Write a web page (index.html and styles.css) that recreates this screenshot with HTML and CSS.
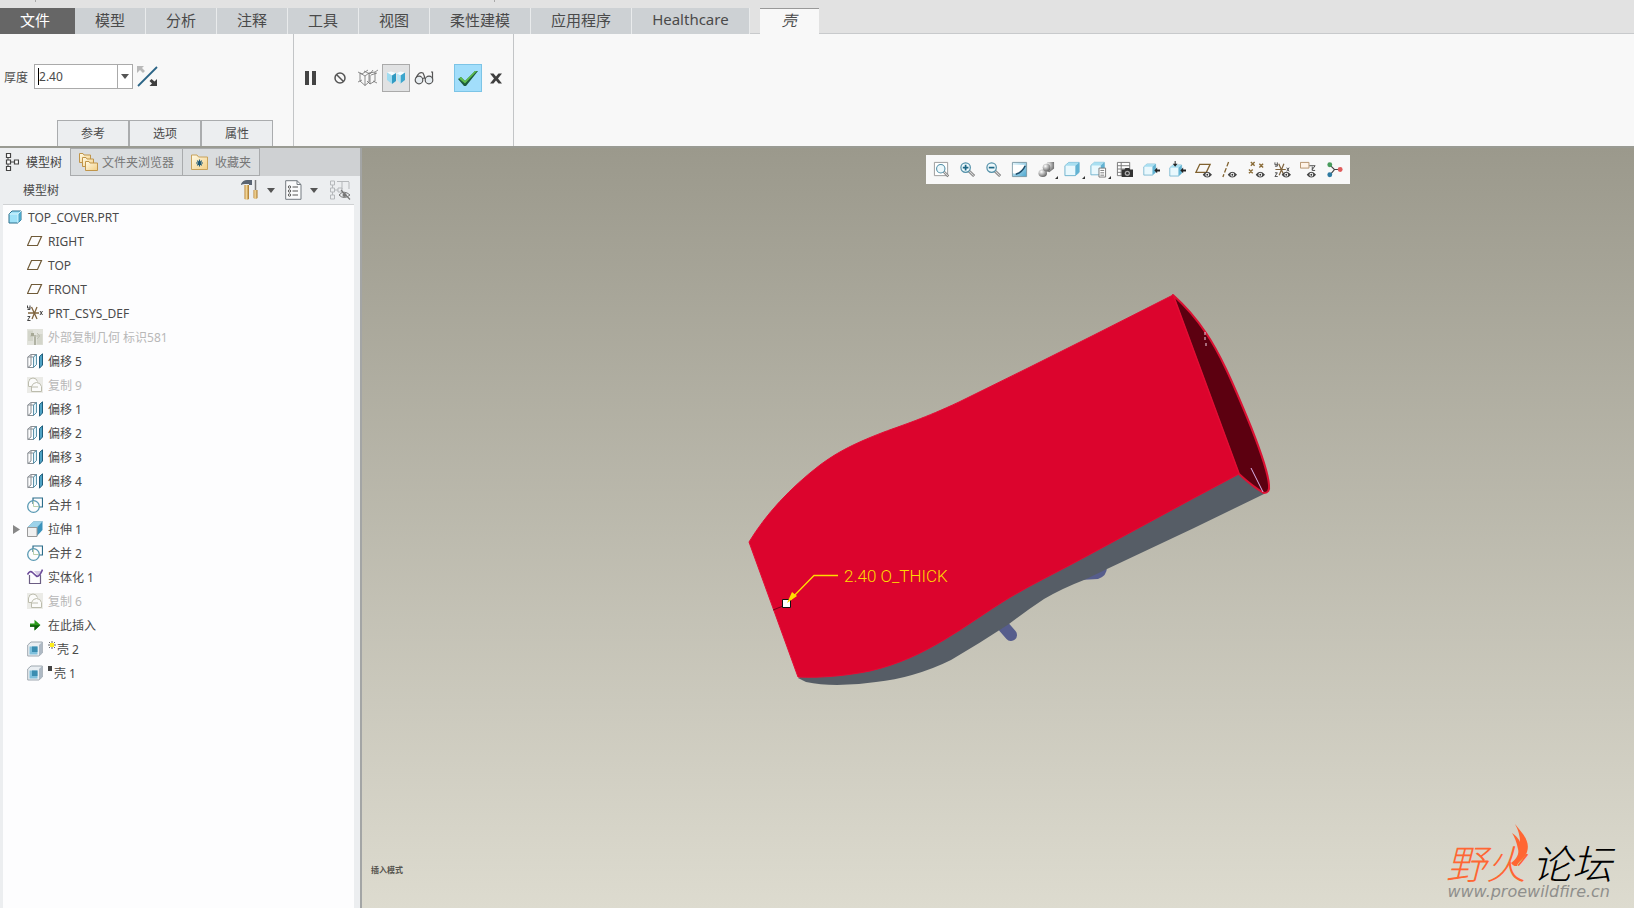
FILE: index.html
```html
<!DOCTYPE html>
<html lang="zh-CN">
<head>
  <meta charset="UTF-8" />
  <title>TOP_COVER.PRT</title>
  <meta name="viewport" content="width=device-width, initial-scale=1.0" />
  <link rel="stylesheet" href="styles.css">
</head>
<body>

<!-- shared icons -->
<svg class="defs" aria-hidden="true">
  <defs>
    <linearGradient id="wood" x1="0" x2="1" y1="0" y2="0">
      <stop offset="0" stop-color="#b8812f"/><stop offset=".4" stop-color="#f6dca0"/><stop offset="1" stop-color="#a87424"/>
    </linearGradient>
    <linearGradient id="folderFill" x1="0" x2="1" y1="0" y2="1">
      <stop offset="0" stop-color="#fffbe8"/><stop offset="1" stop-color="#f3cf85"/>
    </linearGradient>
    <linearGradient id="blueFill" x1="0" x2="1" y1="0" y2="1">
      <stop offset="0" stop-color="#eaf8fd"/><stop offset="1" stop-color="#4aa6cf"/>
    </linearGradient>
    <radialGradient id="metal" cx=".35" cy=".3" r=".8">
      <stop offset="0" stop-color="#fff"/><stop offset=".5" stop-color="#aaa"/><stop offset="1" stop-color="#555"/>
    </radialGradient>
    <symbol id="plane" viewBox="0 0 16 16">
      <path d="M4.500 3.500H14.500L10.500 12.500H.5Z" fill="none" stroke="#6f5a38" stroke-width="1.200"/>
    </symbol>
    <symbol id="part" viewBox="0 0 14 14">
      <path d="M1 4L4 1H13V10L10 13H1Z" fill="#9fe2f8" stroke="#2b6f8c"/>
      <path d="M10 4L13 1V10L10 13Z" fill="#4da8cb"/>
      <path d="M1.500 4H10V13M10 4L13 1" fill="none" stroke="#e8fbff" stroke-width=".8"/>
    </symbol>
    <symbol id="csys" viewBox="0 0 16 16">
      <path d="M1 8H12M4.500 2L10 14M10 2L5 14" stroke="#80653f" stroke-width="1.300"/>
      <path d="M.5 .5V3H3M3 .5V4.500H.5M13 6l2.500 4M15.500 6L13 10M.5 11.500H3L.5 15.500H3.500" fill="none" stroke="#444"/>
    </symbol>
    <symbol id="offset" viewBox="0 0 16 16">
      <path d="M.8 4L4 1.500H9.500V11.500L6.500 14.500H.8ZM4 1.500V12L.8 14.500M6.500 4V14.500M6.500 4L9.500 1.500M.8 4H6.500" fill="none" stroke="#8a8f94"/>
      <path d="M6.500 4L9.500 1.500V11.500L6.500 14.500Z" fill="#e4f3f9" stroke="#5d93ab"/>
      <path d="M12.500 3.500L15.500 .8V12L12.500 15.200Z" fill="#4fa3c6" stroke="#1e5d7b"/>
    </symbol>
    <symbol id="copy" viewBox="0 0 16 16">
      <path d="M0 0H16V16H0Z" fill="#ebebe7"/>
      <path d="M1 5Q2 1 6 1Q9.500 1 10.500 4.500L8 6L4 10H1Z" fill="#fbfbfa"/>
      <path d="M4.500 14.500V9.500Q6 5.500 9.500 5.500Q13.500 5.500 14.500 9.500V14.500Z" fill="#fbfbfa"/>
      <path d="M1.500 9.500V5Q2 1 6 1Q9.500 1 10.500 4.500M4.500 14.500V9.500Q6 5.500 9.500 5.500Q13.500 5.500 14.500 9.500V14.500H4.500ZM4.500 10H11M1.500 9.500H5" fill="none" stroke="#bcbcad"/>
    </symbol>
    <symbol id="extcopy" viewBox="0 0 16 16">
      <path d="M0 0H16V16H0Z" fill="#e2e3dc"/>
      <path d="M1 1.500H6V12H1ZM10 5H15.500V15.500H10Z" fill="#d3d5ca"/>
      <path d="M7 6H9V16H7Z" fill="#b0b2a3"/>
      <path d="M3 7H13M10 4L13 7L10 10" fill="none" stroke="#bfc1b4"/>
      <path d="M4 4H7V7H4Z" fill="#a7a996"/>
    </symbol>
    <symbol id="merge" viewBox="0 0 16 16">
      <path d="M6 7V1H15.500V10H12" fill="none" stroke="#2b6d8a" stroke-width="1.200"/>
      <circle cx="6.500" cy="9.500" r="5.800" fill="none" stroke="#5a9ab3" stroke-width="1.300"/>
      <path d="M6.500 4V9.500H12" fill="none" stroke="#b9cfae"/>
    </symbol>
    <symbol id="extrude" viewBox="0 0 16 16">
      <path d="M.5 6.500L6.500 .5H15.500L10 6.500Z" fill="#9dd3ea" stroke="#7bb3cb" stroke-width=".6"/>
      <path d="M10 6.500L15.500 .5V9L10 15Z" fill="#3c93bb"/>
      <path d="M.5 6.500H10V15.500H.5Z" fill="#f1f1f1" stroke="#9a9a9a"/>
    </symbol>
    <symbol id="solidify" viewBox="0 0 16 16">
      <path d="M2.500 6V14.500H13.500V6" fill="none" stroke="#6b5d83" stroke-width="1.200"/>
      <path d="M7 2H14V6L11 7Z" fill="#d6cbe4"/>
      <path d="M.5 5.500Q3 1 5.500 3.500T10 7.500Q13 7 15.500 .5" fill="none" stroke="#6d4c9b" stroke-width="1.600"/>
    </symbol>
    <symbol id="insert" viewBox="0 0 16 16">
      <path d="M3 6.500H7.500V2.800L13.500 8L7.500 13.500V9.800H3Z" fill="#2a9a1a"/>
      <path d="M3 8.200H13L7.500 13.500V9.800H3Z" fill="#0e5f0b"/>
    </symbol>
    <symbol id="shell" viewBox="0 0 16 16">
      <path d="M.7 4L4 1H15.300V12L12 15H.7Z" fill="#e9eef2" stroke="#9fa8b0"/>
      <path d="M12 4L15.300 1V12L12 15Z" fill="#aeb9c4"/>
      <path d="M2.500 5.500H10.500V13.500H2.500Z" fill="#7fc0dc"/>
      <path d="M5 5.500H10.500V11H5Z" fill="#3b8db1"/>
    </symbol>
    <symbol id="eye" viewBox="0 0 9 6">
      <path d="M0 3Q4.500 -2.500 9 3Q4.500 8.500 0 3Z" fill="#444"/><circle cx="4.500" cy="3" r="1.800" fill="#fff"/><circle cx="4.500" cy="3" r=".9" fill="#333"/>
    </symbol>
    <symbol id="lens" viewBox="0 0 18 18">
      <path d="M10.500 10.500L16 16" stroke="#777" stroke-width="3"/>
      <path d="M10.500 10.500L15.500 15.500" stroke="#ddd" stroke-width="1.200"/>
      <circle cx="7" cy="7" r="5" fill="#edf8fb" stroke="#5390a8" stroke-width="1.300"/>
    </symbol>
    <symbol id="cube" viewBox="0 0 18 18">
      <path d="M1 5L5 1.500H16V12L12 15.500H1Z" fill="#e9f8fd" stroke="#6cb1cd"/>
      <path d="M1 5L5 1.500H16L12 5Z" fill="#a9dff1"/>
      <path d="M12 5L16 1.500V12L12 15.500Z" fill="#62b3d3"/>
    </symbol>
    <symbol id="drop" viewBox="0 0 8 5"><path d="M0 0H8L4 5Z" fill="#555"/></symbol>
    <symbol id="corner" viewBox="0 0 3 3"><path d="M3 0V3H0Z" fill="#333"/></symbol>
  </defs>
</svg>

<div class="app">
  <div class="quickbar"><i></i><i></i></div>

  <nav class="ribbon-tabs">
    <button class="file">文件</button>
    <button>模型</button>
    <button>分析</button>
    <button>注释</button>
    <button>工具</button>
    <button>视图</button>
    <button>柔性建模</button>
    <button>应用程序</button>
    <button>Healthcare</button>
    <button class="current">壳</button>
  </nav>

  <section class="ribbon">
    <div class="group dashboard">
      <div class="thickness">
        <label for="thick">厚度</label>
        <div class="combo">
          <span class="caret"></span>
          <input type="text" id="thick" value="2.40">
          <button aria-label="厚度列表"><svg width="8" height="5"><use href="#drop"/></svg></button>
        </div>
        <button class="flip" aria-label="反向">
          <svg width="21" height="21" viewBox="0 0 21 21">
            <path d="M1 20L20 1" stroke="#2a6486" stroke-width="1.800"/>
            <path d="M0 0H7L5 2L8 5L6 7L3 4L0 7Z" fill="#b9b9b9"/>
            <path d="M20 20H12.500L15 17.500L12.500 15L14.500 13L17.500 15.500L20 13Z" fill="#3f3f3f"/>
          </svg>
        </button>
      </div>
      <div class="subtabs">
        <button>参考</button>
        <button>选项</button>
        <button>属性</button>
      </div>
    </div>

    <div class="group controls">
      <button class="pause" aria-label="暂停">
        <svg width="12" height="14"><path d="M1 0H5V14H1ZM8 0H12V14H8Z" fill="#444"/></svg>
      </button>
      <button aria-label="无预览">
        <svg width="12" height="12" viewBox="0 0 12 12"><circle cx="6" cy="6" r="5" fill="none" stroke="#555" stroke-width="1.500"/><path d="M2.500 2.500L9.500 9.500" stroke="#555" stroke-width="1.500"/></svg>
      </button>
      <button aria-label="分离预览">
        <svg width="20" height="18" viewBox="0 0 20 18"><path d="M2 4L7 7L11 4V13L7 16.500L2 12ZM7 7V16.500M11 4L17 3V12L12 15L9 12M0 3L4 5L10 1M17 3L20 1M6 2L12 5L15 1M13 6L19 4M0 13L4 11M15 12L19 14M12 6V15" fill="none" stroke="#707070" stroke-width=".8"/></svg>
      </button>
      <button class="pressed" aria-label="附加预览">
        <svg width="18" height="14" viewBox="0 0 18 14"><path d="M0 1.500L4 .5L9 2L5 4.500Z" fill="#f4fcff"/><path d="M5 4.500L9 2V10L5 13Z" fill="#309ac2"/><path d="M0 1.500L5 4.500V13L0 9Z" fill="#9edcf1"/><path d="M9 2.500L13.500 .5L18 1.500L13.500 4.500Z" fill="#f4fcff"/><path d="M13.500 4.500L18 1.500V9L13.500 12.500Z" fill="#3da6cd"/><path d="M10 2.500L13.500 4.500V12.500L10 9Z" fill="#b9e7f6"/></svg>
      </button>
      <button aria-label="校验">
        <svg width="20" height="14" viewBox="0 0 20 14"><g fill="#e7edf1" stroke="#555" stroke-width="1.200"><circle cx="5" cy="9" r="3.800"/><circle cx="15" cy="9" r="3.800"/><path d="M2 7Q5 0 9 2Q10 4 11 7M8.500 8Q10 6 11.500 8M18.500 8V1H17" fill="none"/></g></svg>
      </button>
      <button class="ok" aria-label="确定">
        <svg width="20" height="15" viewBox="0 0 20 15"><path d="M0 8L3 6L7 10L17 0H20L8 15H6Z" fill="#1e5c3d"/><path d="M1 7.500L3 6L7 10L17 0H19L7 12.500Z" fill="#5fbf4a"/></svg>
      </button>
      <button aria-label="取消">
        <svg width="12" height="11" viewBox="0 0 12 11"><path d="M0 .5H3.500L6 3.500L8.500 .5H12L8 5.500L12 10.500H8.500L6 7.500L3.500 10.500H0L4 5.500Z" fill="#3f3f3f"/></svg>
      </button>
    </div>
  </section>

  <main class="workspace">
    <aside class="navigator">
      <div class="nav-tabs">
        <button class="current">
          <svg width="14" height="20" viewBox="0 0 14 20"><path d="M3 5V15M5 10H9" stroke="#444"/><path d="M1.500 1.500H5.500V5.500H1.500ZM1.500 8H5.500V12H1.500ZM1.500 14.500H5.500V18.500H1.500ZM9.500 8H13.500V12H9.500Z" fill="#fff" stroke="#444" stroke-width="1.200"/></svg>
          模型树
        </button>
        <button class="folders">
          <svg width="19" height="19" viewBox="0 0 19 19"><g fill="url(#folderFill)" stroke="#c0954a"><path d="M.5 1.500H4L5 3H11.500V10.500H.5Z"/><path d="M3.500 5.500H7L8 7H14.500V14.500H3.500Z"/><path d="M6.500 9.500H10L11 11H18.500V18.500H6.500Z"/></g></svg>
          文件夹浏览器
        </button>
        <button class="favorites">
          <svg width="17" height="16" viewBox="0 0 17 16"><path d="M.5 1H6L7.500 3H16.500V15.500H.5Z" fill="url(#folderFill)" stroke="#c9a25a"/><path d="M8.500 5.500V12.500M5 9H12M6.200 6.700L10.800 11.300M10.800 6.700L6.200 11.300" stroke="#1c5877" stroke-width="1.100"/></svg>
          收藏夹
        </button>
      </div>

      <header class="tree-head">
        <h2>模型树</h2>
        <button class="tools" aria-label="设置">
          <svg width="18" height="20" viewBox="0 0 18 20"><path d="M0 4Q2 0 6 0H11V5H8V4H4Q2 4 0 5Z" fill="#5a6472"/><path d="M3.500 5H8V19Q6 20.500 3.500 19Z" fill="url(#wood)"/><path d="M14.500 0V10" stroke="#777" stroke-width="1.500"/><path d="M12.500 10H16.500V18Q14.500 20 12.500 18Z" fill="url(#wood)"/></svg>
          <svg width="8" height="5"><use href="#drop"/></svg>
        </button>
        <button class="show" aria-label="显示">
          <svg width="17" height="20" viewBox="0 0 17 20"><path d="M.7 .7H12L16 4.500V19.300H.7Z" fill="#fafbfc" stroke="#747b81"/><path d="M12 .7V4.500H16" fill="none" stroke="#747b81"/><g fill="none" stroke="#555"><circle cx="4.500" cy="7" r="1.200"/><circle cx="4.500" cy="11" r="1.200"/><circle cx="4.500" cy="15" r="1.200"/><path d="M7.500 7H13M7.500 11H13M7.500 15H13"/></g></svg>
          <svg width="8" height="5"><use href="#drop"/></svg>
        </button>
        <button class="hide" aria-label="隐藏树">
          <svg width="21" height="20" viewBox="0 0 21 20"><g fill="none" stroke="#b5b8bb"><path d="M.5 1H4.500V5H.5ZM.5 8H4.500V12H.5ZM.5 15H4.500V19H.5ZM2.500 5V8M2.500 12V15M4.500 10H8M8 8H12V12H8ZM7 1.500H19M12 2V9M19 2V9"/></g><path d="M9 15Q14 9.500 20 15Q14 20 9 15Z" fill="none" stroke="#777"/><circle cx="14.500" cy="15" r="2" fill="#777"/><path d="M11 10L20 19.500" stroke="#777" stroke-width="1.200"/></svg>
        </button>
      </header>

      <ul class="tree">
        <li class="root"><svg width="14" height="14"><use href="#part"/></svg>TOP_COVER.PRT</li>
        <li><svg><use href="#plane"/></svg>RIGHT</li>
        <li><svg><use href="#plane"/></svg>TOP</li>
        <li><svg><use href="#plane"/></svg>FRONT</li>
        <li><svg><use href="#csys"/></svg>PRT_CSYS_DEF</li>
        <li class="off"><svg><use href="#extcopy"/></svg>外部复制几何 标识581</li>
        <li><svg><use href="#offset"/></svg>偏移 5</li>
        <li class="off"><svg><use href="#copy"/></svg>复制 9</li>
        <li><svg><use href="#offset"/></svg>偏移 1</li>
        <li><svg><use href="#offset"/></svg>偏移 2</li>
        <li><svg><use href="#offset"/></svg>偏移 3</li>
        <li><svg><use href="#offset"/></svg>偏移 4</li>
        <li><svg><use href="#merge"/></svg>合并 1</li>
        <li class="branch">
          <button aria-label="展开"><svg width="7" height="9"><path d="M0 0L7 4.500L0 9Z" fill="#888"/></svg></button>
          <svg><use href="#extrude"/></svg>拉伸 1
        </li>
        <li><svg><use href="#merge"/></svg>合并 2</li>
        <li><svg><use href="#solidify"/></svg>实体化 1</li>
        <li class="off"><svg><use href="#copy"/></svg>复制 6</li>
        <li><svg><use href="#insert"/></svg>在此插入</li>
        <li><svg><use href="#shell"/></svg><svg class="mark new" viewBox="0 0 8 8"><path d="M4 0V8M0 4H8M1 1L7 7M7 1L1 7" stroke="#555" stroke-width=".9"/><path d="M2 2H6V6H2Z" fill="#ffee1a"/></svg>壳 2</li>
        <li><svg><use href="#shell"/></svg><svg class="mark old" viewBox="0 0 5 8"><path d="M0 1H4V6H0Z" fill="#444"/></svg>壳 1</li>
      </ul>
    </aside>

    <section class="viewport">
      <svg class="scene" viewBox="362 148 1272 760" preserveAspectRatio="xMidYMid meet">
        <!-- side wall and the two bosses below it -->
        <path d="M1004 627L1011 635" stroke="#565d8c" stroke-width="12" stroke-linecap="round"/>
        <path d="M1080 580L1098 579Q1107 576 1107 567L1090 570Z" fill="#565d8c"/>
        <path d="M798 678L806 682Q820 685 837 685Q857 685 876 682Q895 680 912 675Q933 669 951 660Q980 643 1009 624Q1026 611 1044 599Q1063 588 1084 580L1107 569L1194 528L1264 494L1239 473L1000 579L830 663Z" fill="#565d66"/>
        <!-- open end -->
        <path d="M1173 295Q1192 312 1206 333C1219 352 1231 378 1251 427Q1268 470 1269 485Q1270 493 1264 493Q1253 487 1239 474Z" fill="#5c0010" stroke="#dc1234" stroke-width="2" stroke-linejoin="round"/>
        <!-- top face -->
        <path d="M1173 295L1094 335L1030 367L959 402C925 418 903 425 884 432C850 445 835 454 820 465C790 488 766 514 749 542L798 677C820 678 845 676 870 671C900 664 922 653 944 640C966 627 986 612 1009 598C1034 583 1060 571 1087 556L1194 498L1239 474Z" fill="#dc042d" stroke="#e40b34"/>
        <path d="M1251 468L1263 492" stroke="#dcb5ee"/>
        <path d="M1205 332V340M1206 343V347" stroke="#f0d6e6" stroke-dasharray="3 2"/>
        <path d="M773 610L783 606" stroke="#7a0018"/>
        <!-- thickness callout -->
        <path d="M838 575.500H814L787 603" fill="none" stroke="#ffdc00" stroke-width="1.300"/>
        <path d="M782.500 599.500H790.500V607.500H782.500Z" fill="#fff" stroke="#111"/>
        <path d="M787 603L792 592L797 596Z" fill="#ffdc00"/>
        <text class="callout" x="844" y="582">2.40 O_THICK</text>
      </svg>

      <div class="view-tools">
        <button aria-label="重新调整"><svg viewBox="0 0 18 18"><path d="M1.500 1.500H15.500V15.500H1.500Z" fill="#fff" stroke="#999"/><use href="#lens" x="2" y="2" width="16" height="16"/></svg></button>
        <button aria-label="放大"><svg viewBox="0 0 18 18"><use href="#lens" width="18" height="18"/><path d="M4 7H10M7 4V10" stroke="#1d6785" stroke-width="1.800"/></svg></button>
        <button aria-label="缩小"><svg viewBox="0 0 18 18"><use href="#lens" width="18" height="18"/><path d="M4 7H10" stroke="#1d6785" stroke-width="1.800"/></svg></button>
        <button aria-label="重画"><svg viewBox="0 0 18 18"><path d="M1.500 1.500H16.500V16.500H1.500Z" fill="url(#blueFill)" stroke="#7c9aa7"/><path d="M2 4H15Q14 10 6 14L2 13Z" fill="#fff"/><path d="M5 14Q12 12 15 5" fill="none" stroke="#1f4e6c" stroke-width="1.700"/></svg></button>
        <button aria-label="渲染选项"><svg viewBox="0 0 18 18"><path d="M10 1H17V8L12 12L7 10Z" fill="url(#metal)"/><ellipse cx="5" cy="13" rx="4.500" ry="4" fill="url(#metal)"/><circle cx="9" cy="7" r="4" fill="url(#metal)"/></svg><svg class="corner"><use href="#corner"/></svg></button>
        <button aria-label="显示样式"><svg viewBox="0 0 18 18"><use href="#cube" width="18" height="18"/></svg><svg class="corner"><use href="#corner"/></svg></button>
        <button aria-label="已保存方向"><svg viewBox="0 0 18 18"><use href="#cube" width="17" height="17"/><path d="M9.500 7.500H16.500V17H9.500Z" fill="#fff" stroke="#777"/><path d="M11 10H15M11 12.500H15M11 15H15" stroke="#777"/></svg><svg class="corner"><use href="#corner"/></svg></button>
        <button aria-label="视图管理器"><svg viewBox="0 0 18 18"><path d="M1.500 1.500H14.500V15.500H1.500ZM1.500 5H14.500M1.500 8.500H14.500M1.500 12H14.500M5.500 1.500V15.500" fill="#fff" stroke="#777"/><path d="M6 9H9L10 7.500H14L15 9H18V17H6Z" fill="#333"/><circle cx="12" cy="13" r="2.800" fill="#aaa"/><circle cx="12" cy="13" r="1.400" fill="#333"/></svg></button>
        <button aria-label="截面"><svg viewBox="0 0 18 18"><use href="#cube" y="2" width="15" height="15"/><path d="M12 10L15 7V9H18V11H15V13Z" fill="#222"/></svg></button>
        <button aria-label="透视图"><svg viewBox="0 0 18 18"><use href="#cube" y="3" width="15" height="15"/><path d="M12 10L15 7V9H18V11H15V13ZM4 3H6V0H7V3H9L6.500 6Z" fill="#222"/></svg></button>
        <button aria-label="平面显示"><svg viewBox="0 0 18 18"><path d="M5 3.500H16L12 12H1Z" fill="none" stroke="#81622f" stroke-width="1.400"/><use href="#eye" x="8" y="11" width="10" height="7"/></svg></button>
        <button aria-label="轴显示"><svg viewBox="0 0 18 18"><path d="M8 1L2 17" stroke="#81622f" stroke-width="1.400" stroke-dasharray="5 2"/><use href="#eye" x="7" y="11" width="10" height="7"/></svg></button>
        <button aria-label="点显示"><svg viewBox="0 0 18 18"><path d="M3 1L7 5M7 1L3 5M12 3L16 7M16 3L12 7M1 9L5 13M5 9L1 13" stroke="#8a6c38" stroke-width="1.500"/><use href="#eye" x="8" y="11" width="10" height="7"/></svg></button>
        <button aria-label="坐标系显示"><svg viewBox="0 0 18 18"><use href="#csys" y="1" width="17" height="16"/><use href="#eye" x="8" y="11" width="10" height="7"/></svg></button>
        <button aria-label="注释显示"><svg viewBox="0 0 18 18"><path d="M.5 1.500H9.500V7.500H.5Z" fill="#fff3e7" stroke="#b4906a"/><path d="M10 5H16L13 9M13 6V10H16" fill="none" stroke="#444"/><use href="#eye" x="7" y="11" width="10" height="7"/></svg></button>
        <button aria-label="旋转中心"><svg viewBox="0 0 18 18"><path d="M4 4L9 9L4 15M9 9H15" fill="none" stroke="#444" stroke-width="1.200"/><circle cx="4" cy="4" r="2.600" fill="#489b5c"/><circle cx="15" cy="9" r="2.600" fill="#e05c5c"/><circle cx="4" cy="14.500" r="2.600" fill="#2f7ba2"/></svg></button>
      </div>

      <p class="status">插入模式</p>

      <div class="brand">
        <div class="brand-name">
          <span class="fire">野火<svg width="18" height="42" viewBox="0 0 18 42"><path d="M4 0C9 7 20 16 16 28C13 36 7 37 6 42Q3 43 0 39C7 34 8 29 7 25Q5 15 1 9Q7 13 9 18Q9 9 4 0Z" fill="#ff6633"/></svg></span><span class="forum">论坛</span>
        </div>
        <a href="http://www.proewildfire.cn">www.proewildfire.cn</a>
      </div>
    </section>
  </main>
</div>

</body>
</html>
```
FILE: styles.css
```css
* {
  box-sizing: border-box;
}
body {
  margin: 0;
  font-family: "Noto Sans", "Noto Sans CJK SC", sans-serif;
  font-size: 12px;
  color: #4a4a4a;
  background: #f8f8f8;
}
button {
  display: flex;
  align-items: center;
  justify-content: center;
  margin: 0;
  padding: 0;
  border: none;
  background: none;
  font: inherit;
  color: inherit;
  cursor: pointer;
}
svg {
  flex: none;
  display: block;
}
.defs {
  position: absolute;
  width: 0;
  height: 0;
}
.app {
  display: flex;
  flex-direction: column;
  height: 100vh;
  overflow: hidden;
}

/* Top strip and ribbon tabs */
.quickbar {
  display: flex;
  flex: none;
  height: 8px;
  background: #e2e2e2;
}
.quickbar i {
  width: 1px;
  height: 2px;
  margin-left: 35px;
  background: #aaa;
}
.quickbar i + i {
  margin-left: 458px;
}
.ribbon-tabs {
  display: flex;
  flex: none;
  height: 26px;
  background: #e2e2e2;
  box-shadow: inset 0 -1px #c8cacc;
  font-size: 15px;
}
.ribbon-tabs button {
  padding: 0 20px 4px;
  background: #cdd1d4;
  border-right: 1px solid #e9ebec;
}
.ribbon-tabs .file {
  padding-right: 25px;
  border-right: none;
  background: #666;
  color: #fff;
}
.ribbon-tabs .current {
  margin-left: 10px;
  padding: 0 22px 4px;
  border-right: none;
  border-top: 1px solid #999;
  background: #f8f8f8;
  font-style: italic;
}

/* Shell dashboard */
.ribbon {
  display: flex;
  flex: none;
  height: 112px;
  background: #f8f8f8;
}
.group {
  border-right: 1px solid #c3c5c7;
}
.dashboard {
  display: flex;
  flex-direction: column;
  justify-content: space-between;
  width: 294px;
  padding-top: 30px;
}
.thickness {
  display: flex;
  align-items: center;
  padding-left: 4px;
}
.combo {
  display: flex;
  width: 99px;
  height: 25px;
  margin: 0 4px 0 6px;
  border: 1px solid #aaa;
  background: #fff;
}
.caret {
  width: 1px;
  margin: 3px 0 3px 3px;
  background: #000;
}
.combo input {
  flex: 1;
  min-width: 0;
  padding: 0 0 1px;
  border: none;
  background: none;
  font: inherit;
  color: inherit;
}
.combo button {
  width: 15px;
  border-left: 1px solid #aaa;
}
.subtabs {
  display: flex;
  padding-left: 57px;
}
.subtabs button {
  width: 72px;
  height: 26px;
  padding-bottom: 1px;
  border: 1px solid #aaacae;
  border-bottom: none;
  background: #eceef0;
}
.controls {
  display: flex;
  width: 220px;
  padding: 30px 0 0 2px;
}
.controls button {
  width: 28px;
  height: 28px;
}
.controls .pause {
  margin-right: 2px;
}
.controls .pressed {
  border: 1px solid #aaa;
  background: #e1e2e3;
}
.controls .ok {
  margin-left: 16px;
  border: 1px solid #7cc4e6;
  background: #a2defb;
}

/* Navigator */
.workspace {
  display: flex;
  flex: 1;
  min-height: 0;
  border-top: 2px solid #9a9b93;
}
.navigator {
  display: flex;
  flex-direction: column;
  flex: none;
  width: 362px;
  background: #eceef0;
  border-right: 2px solid #a3a5a5;
}
.nav-tabs {
  display: flex;
  height: 28px;
  background: #cfd1d3;
}
.nav-tabs button {
  gap: 7px;
  padding: 0 8px 1px;
  border: 1px solid #a9abad;
  border-left: none;
  background: #dadddf;
  color: #777;
}
.nav-tabs .current {
  padding: 0 8px 1px 5px;
  border-top: none;
  border-bottom: none;
  background: #eceef0;
  color: #444;
}
.nav-tabs .folders {
  gap: 4px;
}
.tree-head {
  display: flex;
  align-items: center;
  height: 28px;
  padding: 0 9px 0 23px;
}
.tree-head h2 {
  flex: 1;
  margin: 0;
  font-size: 12px;
  font-weight: normal;
}
.tree-head button {
  gap: 8px;
}
.tree-head .show {
  margin: 0 12px 0 10px;
}
.tree {
  flex: 1;
  margin: 0 6px 0 3px;
  padding: 0;
  border-top: 1px solid #cfd1d3;
  background: #fdfdfe;
  list-style: none;
}
.tree li {
  display: flex;
  align-items: center;
  gap: 5px;
  height: 24px;
  padding-left: 24px;
}
.tree li > svg {
  width: 16px;
  height: 16px;
}
.tree .root {
  gap: 6px;
  padding-left: 5px;
}
.tree .root > svg {
  width: 14px;
  height: 14px;
}
.tree .off {
  color: #b8b8b8;
}
.tree .branch {
  padding-left: 10px;
}
.tree .branch button {
  width: 9px;
  justify-content: flex-start;
}
.tree li > .mark {
  width: 8px;
  height: 8px;
  margin: 0 -4px 8px 0;
}
.tree li > .old {
  width: 5px;
}

/* Graphics area */
.viewport {
  position: relative;
  flex: 1;
  min-width: 0;
  background: linear-gradient(#9b998c, #dddbcf);
}
.scene {
  width: 100%;
  height: 100%;
}
.callout {
  font-family: Roboto, sans-serif;
  font-size: 17px;
  font-weight: 300;
  fill: #ffdc00;
}
.view-tools {
  position: absolute;
  top: 7px;
  right: 284px;
  display: flex;
  width: 424px;
  height: 29px;
  padding: 0 2px;
  background: #f8f8f8;
}
.view-tools button {
  position: relative;
  flex: 1;
}
.view-tools svg {
  width: 17px;
  height: 17px;
}
.view-tools .corner {
  position: absolute;
  right: 1px;
  bottom: 5px;
  width: 3px;
  height: 3px;
}
.status {
  position: absolute;
  left: 9px;
  bottom: 33px;
  margin: 0;
  font-size: 8px;
  font-weight: bold;
  color: #55544e;
}
.brand {
  position: absolute;
  right: 22px;
  bottom: 6px;
  text-align: right;
}
.brand-name {
  display: flex;
  justify-content: flex-end;
  gap: 6px;
  font-family: "Noto Sans CJK SC", sans-serif;
  font-size: 40px;
  font-style: italic;
  font-weight: 300;
  line-height: 40px;
  color: #000;
}
.fire {
  position: relative;
  color: #ff6633;
}
.fire svg {
  position: absolute;
  top: -18px;
  right: -3px;
}
.brand a {
  display: block;
  padding-right: 2px;
  font-family: "DejaVu Sans", sans-serif;
  font-size: 16px;
  font-style: italic;
  line-height: 20px;
  color: #8f8f8c;
  text-decoration: none;
}
```
